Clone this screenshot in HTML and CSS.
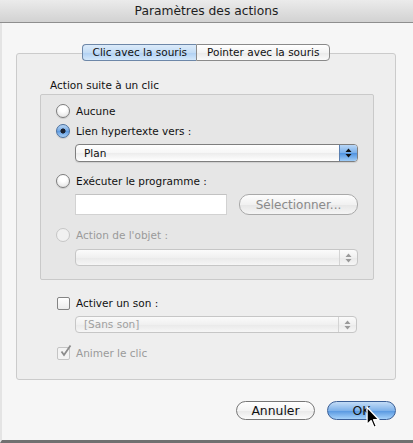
FILE: index.html
```html
<!DOCTYPE html>
<html lang="fr">
<head>
<meta charset="utf-8">
<title>Paramètres des actions</title>
<link rel="stylesheet" href="styles.css">
</head>
<body>
<div class="window">
  <div class="titlebar">Paramètres des actions</div>
  <div class="content">
    <div class="tabs">
      <span class="tab tab-sel">Clic avec la souris</span><span class="tab">Pointer avec la souris</span>
    </div>
    <div class="panel">
      <div class="group-label">Action suite à un clic</div>
      <div class="group">
        <div class="row"><span class="radio"></span>Aucune</div>
        <div class="row row-gap4"><span class="radio radio-on"></span>Lien hypertexte vers :</div>
        <div class="popup popup-plan"><span class="popup-text">Plan</span><span class="stepper"><svg width="7" height="10" viewBox="0 0 7 10"><path d="M3.5 0.5 L6.5 4 L0.5 4 Z M0.5 6 L6.5 6 L3.5 9.5 Z" fill="#111"/></svg></span></div>
        <div class="row row-gap11"><span class="radio"></span>Exécuter le programme :</div>
        <div class="field-line">
          <span class="field"></span>
          <span class="btn btn-select">Sélectionner...</span>
        </div>
        <div class="row row-gap12 disabled"><span class="radio radio-dis"></span>Action de l'objet :</div>
        <div class="popup popup-dis popup-action"><span class="popup-text"></span><span class="stepper-dis"><svg width="7" height="10" viewBox="0 0 7 10"><path d="M3.5 0.5 L6.5 4 L0.5 4 Z M0.5 6 L6.5 6 L3.5 9.5 Z" fill="#9a9a9a"/></svg></span></div>
      </div>
      <div class="sound">
        <div class="row"><span class="check"></span>Activer un son :</div>
        <div class="popup popup-dis popup-sound"><span class="popup-text">[Sans son]</span><span class="stepper-dis"><svg width="7" height="10" viewBox="0 0 7 10"><path d="M3.5 0.5 L6.5 4 L0.5 4 Z M0.5 6 L6.5 6 L3.5 9.5 Z" fill="#9a9a9a"/></svg></span></div>
        <div class="row row-gap12 disabled"><span class="check check-dis"><svg width="13" height="13" viewBox="0 0 13 13"><path d="M2.5 6.5 L5 10 L11.5 0.5" fill="none" stroke="#8c8c8c" stroke-width="1.8"/></svg></span>Animer le clic</div>
      </div>
    </div>
    <div class="buttons">
      <span class="btn btn-cancel">Annuler</span>
      <span class="btn btn-ok">OK</span>
      <svg class="cursor" width="14" height="24" viewBox="0 0 13 22"><path d="M1 1 L1 17 L4.8 13.4 L7.4 19.6 L9.6 18.6 L7 12.6 L12 12.6 Z" fill="#000" stroke="#fff" stroke-width="1.2" stroke-linejoin="round"/></svg>
    </div>
  </div>
</div>
</body>
</html>
```
FILE: styles.css
```css
* { box-sizing: border-box; }
html, body { margin: 0; padding: 0; }
body {
  width: 413px;
  height: 443px;
  overflow: hidden;
  background: #f5f5f5;
  font-family: "DejaVu Sans", "Liberation Sans", sans-serif;
  font-size: 10.5px;
  color: #111;
}
.window {
  width: 413px;
  height: 443px;
  display: flex;
  flex-direction: column;
  background: #f6f6f6;
  border-bottom: 3px solid #707070;
  border-left: 2px solid #e4e4e4;
}
.titlebar {
  height: 23px;
  flex: none;
  background: linear-gradient(#ebebeb, #d2d2d2);
  border-bottom: 1px solid #8e8e8e;
  margin-left: -2px;
  text-align: center;
  font-size: 12.3px;
  line-height: 22px;
  color: #1e1e1e;
}
.content {
  padding: 21px 17px 0 14px;
  display: flex;
  flex-direction: column;
}
.tabs {
  display: flex;
  justify-content: center;
  position: relative;
  z-index: 2;
  height: 17px;
}
.tab {
  height: 17px;
  line-height: 15px;
  padding: 0 9px 0 10px;
  border: 1px solid #8a8a8a;
  background: linear-gradient(#ffffff, #f3f3f3 50%, #e9e9e9 51%, #fafafa);
  color: #111;
}
.tab-sel {
  border-radius: 4px 0 0 4px;
  border-right: none;
  background: linear-gradient(#dcebfa, #c3dcf5 50%, #aecff2 51%, #d4e8fb);
  border-color: #6d87a8;
}
.tab + .tab {
  border-radius: 0 4px 4px 0;
  padding: 0 10px 0 10px;
}
.panel {
  margin-top: -8px;
  height: 327px;
  border: 1px solid #cbcbcb;
  border-radius: 3px;
  background: #eeeeee;
  padding-top: 24px;
  display: flex;
  flex-direction: column;
}
.group-label {
  line-height: 14px;
  margin: 0 0 2px 33px;
}
.group {
  margin: 0 21px 0 23px;
  border: 1px solid #c9c9c9;
  border-radius: 2px;
  background: #e6e6e6;
  padding: 8px 15px 13px 15px;
  display: flex;
  flex-direction: column;
}
.row {
  height: 16px;
  line-height: 16px;
  display: flex;
  align-items: center;
  gap: 6px;
}
.row-gap4 { margin-top: 4px; }
.row-gap11 { margin-top: 11px; }
.row-gap12 { margin-top: 12px; }
.disabled { color: #9a9a9a; }
.radio {
  width: 14px;
  height: 14px;
  flex: none;
  border-radius: 50%;
  border: 1px solid #7d7d7d;
  background: radial-gradient(circle at 50% 30%, #ffffff 30%, #e6e6e6 80%);
  box-shadow: 0 1px 1px rgba(0,0,0,0.12);
}
.radio-on {
  border-color: #4a6f9d;
  background: radial-gradient(circle at 50% 50%, #1b2230 0 2.3px, transparent 2.8px),
              linear-gradient(#b9d6f5, #72a7e3 50%, #5a98e0 51%, #a9d0f7);
}
.radio-dis {
  border-color: #c6c6c6;
  background: #f1f1f1;
  box-shadow: none;
}
.check {
  width: 13px;
  height: 13px;
  flex: none;
  border: 1px solid #848484;
  border-radius: 2px;
  background: linear-gradient(#ffffff, #ececec);
  position: relative;
}
.check-dis {
  border-color: #c4c4c4;
  background: #f3f3f3;
}
.check-dis svg { position: absolute; left: 1px; top: -3px; }
.popup {
  display: flex;
  margin-left: 19px;
  border-radius: 4px;
  overflow: hidden;
}
.popup-plan {
  margin-top: 5px;
  height: 18px;
  border: 1px solid #7f7f7f;
  background: linear-gradient(#ffffff, #f6f6f6 50%, #ececec 51%, #ffffff);
  box-shadow: 0 1px 1px rgba(0,0,0,0.1);
}
.popup-text {
  flex: 1;
  padding-left: 8px;
  line-height: 16px;
}
.stepper {
  width: 18px;
  flex: none;
  border-left: 1px solid #5a7fb0;
  background: linear-gradient(#b9d7f7, #78aee9 50%, #4f92df 51%, #9fccf7);
  display: flex;
  align-items: center;
  justify-content: center;
}
.popup-dis {
  height: 17px;
  border: 1px solid #c6c6c6;
  background: linear-gradient(#fbfbfb, #f0f0f0 50%, #e9e9e9 51%, #f6f6f6);
  color: #a0a0a0;
}
.popup-dis .popup-text { line-height: 15px; }
.stepper-dis {
  width: 18px;
  flex: none;
  border-left: 1px solid #d4d4d4;
  display: flex;
  align-items: center;
  justify-content: center;
}
.popup-action { margin-top: 6px; }
.field-line {
  margin-top: 5px;
  margin-left: 19px;
  display: flex;
  gap: 12px;
  height: 21px;
}
.field {
  width: 152px;
  height: 21px;
  background: #ffffff;
  border: 1px solid #d2d2d2;
  border-top-color: #c2c2c2;
}
.btn {
  display: flex;
  align-items: center;
  justify-content: center;
  border-radius: 10px;
  font-size: 12px;
}
.btn-select {
  flex: 1;
  height: 21px;
  border: 1px solid #a9a9a9;
  background: linear-gradient(#fdfdfd, #f1f1f1 50%, #e6e6e6 51%, #f5f5f5);
  color: #8a8a8a;
}
.sound {
  margin-top: 15px;
  padding: 0 38px 0 40px;
  display: flex;
  flex-direction: column;
}
.popup-sound {
  margin-top: 5px;
  margin-left: 18px;
}
.buttons {
  margin-top: 21px;
  display: flex;
  justify-content: flex-end;
  gap: 12px;
  position: relative;
}
.btn-cancel {
  width: 79px;
  height: 19px;
  border: 1px solid #777;
  background: linear-gradient(#ffffff, #f4f4f4 50%, #e8e8e8 51%, #fbfbfb);
  color: #111;
  font-size: 12.4px;
}
.btn-ok {
  width: 69px;
  height: 19px;
  border: 1px solid #3b5f96;
  background: linear-gradient(#c3dcf6, #7fb2ea 50%, #5596e0 51%, #a6d2fa);
  color: #111;
  font-size: 12.4px;
}
.cursor {
  position: absolute;
  left: 350px;
  top: 5px;
}
```
